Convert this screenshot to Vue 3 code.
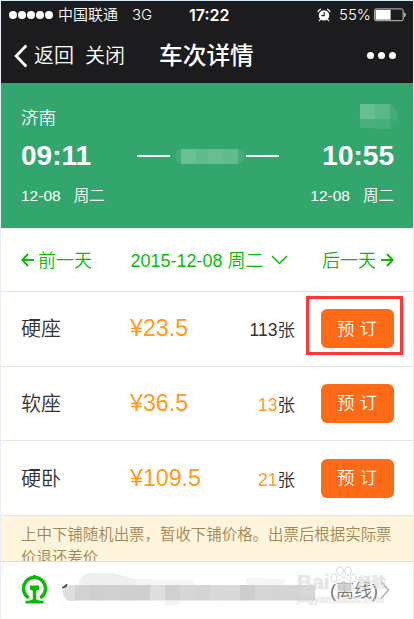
<template>
  <div class="phone">
    <header class="header">
      <div class="status">
        <div class="signal">
          <i v-for="n in 5" :key="n"></i>
        </div>
        <span class="carrier">中国联通</span>
        <span class="network">3G</span>
        <span class="clock">17:22</span>
        <svg class="alarm" width="14" height="14" viewBox="0 0 14 14">
          <circle cx="7" cy="7.4" r="5.2" fill="#fff" />
          <path d="M1 3.6 3.4 1.3M13 3.6 10.6 1.3M3.4 11.600 2.400 12.600M10.600 11.600l1 1" stroke="#fff" stroke-width="1.3" stroke-linecap="round" />
          <path d="M7.2 4v3.6H4.4" fill="none" stroke="#1c1c1f" stroke-width="1.1" />
        </svg>
        <span class="percent">55%</span>
        <svg class="battery" width="33" height="14" viewBox="0 0 33 14">
          <rect x=".6" y=".9" width="28.6" height="11.8" rx="1.6" fill="none" stroke="#c4c4c6" />
          <rect x="1.6" y="1.9" width="15" height="9.8" fill="#fff" />
          <path d="M30.4 4.6c1.6.6 1.6 4 0 4.6z" fill="#fff" />
        </svg>
      </div>
      <div class="navbar">
        <svg class="back" width="14" height="24" viewBox="0 0 14 24">
          <path d="M12.3 1.5 2.2 12l10.1 10.5" fill="none" stroke="#fff" stroke-width="2.8" />
        </svg>
        <span class="nav-text">返回</span>
        <span class="nav-text close">关闭</span>
        <h1 class="title">车次详情</h1>
        <div class="more"><i></i><i></i><i></i></div>
      </div>
    </header>

    <section class="trip">
      <div class="stations">
        <span>济南</span>
        <svg width="54" height="26" viewBox="0 0 54 26">
          <path d="M0 14 15 8v8z" fill="#35a76e" />
          <rect x="16" y="0" width="15" height="15" fill="#68be92" />
          <rect x="31" y="0" width="15" height="15" fill="#5ab788" />
          <rect x="16" y="15" width="15" height="9" fill="#4aaf7c" />
          <rect x="31" y="15" width="15" height="10" fill="#48ae7a" />
          <path d="M46 0q8 4 8 15h-8z" fill="#44ac77" />
          <path d="M46 15h8q-2 8-8 10z" fill="#3ba971" />
        </svg>
      </div>
      <div class="times">
        <strong>09:11</strong>
        <div class="route">
          <i></i>
          <svg width="76" height="15" viewBox="0 0 76 15">
            <path d="M11 0Q5 2 5 7.500t6 7.500z" fill="#45ac78" />
            <rect x="11" width="57" height="15" fill="#61bb8d" />
            <rect x="11" width="15" height="15" fill="#6bc096" />
            <rect x="38" width="15" height="15" fill="#67be92" />
            <path d="M68 0q7 2 7 7.500t-7 7.500z" fill="#45ac78" />
          </svg>
          <i></i>
        </div>
        <strong>10:55</strong>
      </div>
      <div class="dates">
        <div><span>12-08</span><span>周二</span></div>
        <div><span>12-08</span><span>周二</span></div>
      </div>
    </section>

    <nav class="days">
      <div class="prev">
        <svg width="13" height="14" viewBox="0 0 13 14">
          <path d="M7 1 1.400 7 7 13M1.400 7H13" />
        </svg>
        <span>前一天</span>
      </div>
      <div class="today">
        <span>2015-12-08 周二</span>
        <svg width="17" height="10" viewBox="0 0 17 10">
          <path d="m1 1 7.500 7.500L16 1" />
        </svg>
      </div>
      <div class="next">
        <span>后一天</span>
        <svg width="13" height="14" viewBox="0 0 13 14">
          <path d="m6 1 5.600 6L6 13M11.600 7H0" />
        </svg>
      </div>
    </nav>

    <ul class="seats">
      <li v-for="seat in seats" :key="seat.name">
        <span class="name">{{ seat.name }}</span>
        <span class="price">¥{{ seat.price }}</span>
        <span class="left"><em :class="{ few: seat.left < 100 }">{{ seat.left }}</em>张</span>
        <button :class="{ marked: seat.marked }">预 订</button>
      </li>
    </ul>

    <p class="notice">上中下铺随机出票，暂收下铺价格。出票后根据实际票价退还差价</p>

    <footer class="account">
      <svg class="logo" width="28" height="30" viewBox="0 0 28 30">
        <path d="M7.800 22.800A11 11 0 1 1 19.200 22.800" fill="none" stroke="#09bb07" stroke-width="3.500" />
        <path d="M9.500 2.500 13.500-.5l4 3z" fill="#09bb07" />
        <path d="M8.800 10.500h9.400v3.700q-1 1.400-3 1.600v8.400q1 1.400 7.300 1.600v2.700h-18v-2.700q6.300-.2 7.300-1.600v-8.400q-2-.2-3-1.600z" fill="#09bb07" />
      </svg>
      <svg class="mosaic" width="272" height="38" viewBox="0 0 272 38">
        <path d="M18 16V9q3-6 10-7h24l22 6v8z" fill="#efefef" />
        <path d="M74 8h16v1h44v7H74zM224 8h-19v-1h-20v9h39z" fill="#f5f5f5" />
        <path d="m1 17 5-4-1 3z" fill="#444" stroke="#444" />
        <path d="M14 14H8q-6 3-6 8 1 6 6 8h6z" fill="#dedede" />
        <rect
          v-for="(c, i) in blocks"
          :key="i"
          :x="14 + i * 15"
          y="14"
          width="15.200"
          height="15.500"
          :fill="c"
        />
        <path d="M104 30h15v4h-15z" fill="#f4f4f4" />
      </svg>
      <span class="offline">(离线)</span>
      <svg class="arrow" width="10" height="20" viewBox="0 0 10 20">
        <path d="m1 1.500 7.500 8.500L1 18.500" fill="none" stroke="#b4b4b4" stroke-width="1.600" />
      </svg>
      <div class="watermark">
        <div class="brand">
          <span>Bai</span>
          <svg width="27" height="27" viewBox="0 0 27 27">
            <ellipse cx="4" cy="12" rx="3" ry="4" />
            <ellipse cx="10" cy="5" rx="3.200" ry="4.200" />
            <ellipse cx="18" cy="5" rx="3.200" ry="4.200" />
            <ellipse cx="23.500" cy="12" rx="3" ry="3.800" />
            <path d="M14 11c-4 0-4 4-7 6s-3 8 1 8h12c5 0 4-6 1-8s-3-6-7-6z" />
            <text x="7.500" y="23.500" font-size="11">du</text>
          </svg>
          <span class="cn">经验</span>
        </div>
        <div class="site">jingyan.baidu.com</div>
      </div>
    </footer>
  </div>
</template>

<script setup>
const seats = [
  { name: '硬座', price: '23.5', left: 113, marked: true },
  { name: '软座', price: '36.5', left: 13 },
  { name: '硬卧', price: '109.5', left: 21 },
];

const blocks = [
  '#d2d2d2', '#cecece', '#d0d0d0', '#cecece', '#cfcfcf', '#dedede', '#d0d0d0', '#d6d6d6',
  '#d4d4d4', '#d9d9d9', '#d8d8d8', '#cdcdcd', '#d6d6d6', '#d5d5d5', '#d5d5d5', '#d8d8d8',
];
</script>

<style>
body {
  margin: 0;
  background: #fff;
}
</style>

<style scoped>
.phone {
  box-sizing: border-box;
  width: 414px;
  height: 619px;
  overflow: hidden;
  border-top: 1px solid #d6e8f5;
  border-left: 1px solid #e6eef9;
  border-right: 1px solid #ebebee;
  background: #fff;
  color: #333;
  font-family: "Liberation Sans", "Noto Sans CJK SC", sans-serif;
  font-weight: 350;
}

svg {
  display: block;
  flex: none;
}

span, strong {
  white-space: nowrap;
}

.header {
  height: 82px;
  background: #1c1c1f;
  color: #fff;
}

.status {
  display: flex;
  align-items: center;
  height: 27px;
  padding-left: 8px;
  font-size: 15px;
}

.signal {
  display: flex;
  gap: 1px;
  width: 49px;
}

.signal i {
  width: 8px;
  height: 8px;
  border-radius: 50%;
  background: #fff;
}

.carrier {
  width: 74px;
  padding-bottom: 2px;
}

.network {
  width: 57px;
  font-family: Inter, sans-serif;
}

.clock {
  width: 129px;
  font-family: Inter, sans-serif;
  font-size: 16px;
  font-weight: 600;
}

.percent {
  width: 35px;
  margin-left: 8px;
  font-family: Inter, sans-serif;
}

.alarm {
  margin-left: -1px;
}

.navbar {
  display: flex;
  align-items: center;
  height: 55px;
  padding-left: 13px;
}

.nav-text {
  margin-left: 6px;
  padding-bottom: 2px;
  font-size: 20px;
}

.nav-text.close {
  margin-left: 11px;
}

.title {
  margin: 0 0 0 34px;
  padding-bottom: 4px;
  font-size: 23.7px;
  font-weight: 500;
}

.more {
  display: flex;
  gap: 4px;
  margin-left: 113px;
}

.more i {
  width: 7px;
  height: 7px;
  border-radius: 50%;
  background: #fff;
}

.trip {
  box-sizing: border-box;
  height: 146px;
  padding: 21px 19px 0 20px;
  border-bottom: 1px solid #e6e9e7;
  background: #32a66c;
  color: #fff;
}

.stations {
  display: flex;
  justify-content: space-between;
  align-items: center;
  height: 26px;
  font-size: 17.5px;
}

.stations span {
  padding-bottom: 2px;
}

.stations svg {
  margin-right: -4px;
}

.times {
  display: flex;
  justify-content: space-between;
  align-items: center;
  height: 52px;
}

.times strong {
  font-size: 28px;
  font-weight: 700;
}

.route {
  display: flex;
  align-items: center;
  margin-left: 2px;
}

.route i {
  width: 33px;
  height: 2px;
  background: #fff;
}

.dates {
  display: flex;
  justify-content: space-between;
  align-items: center;
  height: 24px;
  font-size: 15.5px;
}

.dates div {
  display: flex;
  align-items: baseline;
  gap: 13px;
}

.days {
  box-sizing: border-box;
  display: flex;
  justify-content: space-between;
  align-items: center;
  height: 63px;
  padding: 0 19px 0 20px;
  border-bottom: 1px solid #e4e4e4;
  color: #09bb07;
  font-size: 18px;
}

.days div {
  display: flex;
  align-items: center;
}

.days span {
  padding-bottom: 3px;
}

.days .prev {
  gap: 4px;
}

.days .next {
  gap: 5px;
}

.days .today {
  gap: 7px;
  margin-left: 4px;
}

.days path {
  fill: none;
  stroke: #09bb07;
  stroke-width: 2;
}

.days .today path {
  stroke-width: 1.5;
}

.seats {
  margin: 0;
  padding: 0;
  list-style: none;
}

.seats li {
  box-sizing: border-box;
  display: flex;
  align-items: center;
  height: 74.67px;
  padding: 0 19px 0 20px;
  border-bottom: 1px solid #e4e4e4;
}

.name {
  width: 109px;
  padding-bottom: 2px;
  font-size: 20px;
}

.price {
  flex: 1;
  color: #ff9a1b;
  font-size: 23.2px;
}

.left {
  margin-right: 26px;
  font-size: 17.5px;
}

.left em {
  font-style: normal;
}

.left .few {
  color: #ff9a1b;
}

button {
  position: relative;
  width: 73px;
  height: 39px;
  padding: 0 1px 3px 0;
  border: 0;
  border-radius: 6px;
  background: #ff6a16;
  color: #fff;
  font: inherit;
  font-size: 17.5px;
}

.marked::after {
  content: "";
  position: absolute;
  top: -13px;
  left: -15px;
  box-sizing: border-box;
  width: 97px;
  height: 59px;
  border: 3px solid #fb3838;
}

.notice {
  box-sizing: border-box;
  height: 45px;
  margin: 0;
  padding: 7px 19px 0 20px;
  overflow: hidden;
  background: #fef5dc;
  color: #a58554;
  font-size: 15.45px;
  line-height: 23.5px;
}

.account {
  position: relative;
  box-sizing: border-box;
  display: flex;
  align-items: center;
  height: 58px;
  padding-left: 20px;
  border-top: 1px solid #dcdcdc;
}

.logo {
  margin-right: 12px;
}

.mosaic {
  align-self: flex-start;
  margin-top: 9px;
}

.offline {
  margin-left: -3px;
  padding-bottom: 3px;
  color: #777;
  font-size: 18px;
}

.arrow {
  margin-left: 2px;
}

.watermark {
  position: absolute;
  top: 2px;
  left: 296px;
  color: rgba(255, 255, 255, 0.6);
  font-weight: 700;
  text-shadow: 0 0 1px rgba(0, 0, 0, 0.25);
}

.brand {
  display: flex;
  align-items: flex-end;
  height: 29px;
  font-size: 21px;
  line-height: 22px;
}

.brand svg {
  fill: rgba(255, 255, 255, 0.45);
  stroke: #d4d4d4;
  stroke-width: 0.9;
}

.brand .cn {
  margin-left: 1px;
  font-size: 14px;
}

.site {
  font-size: 10px;
  font-weight: 400;
  line-height: 13px;
  letter-spacing: 0.4px;
}
</style>
